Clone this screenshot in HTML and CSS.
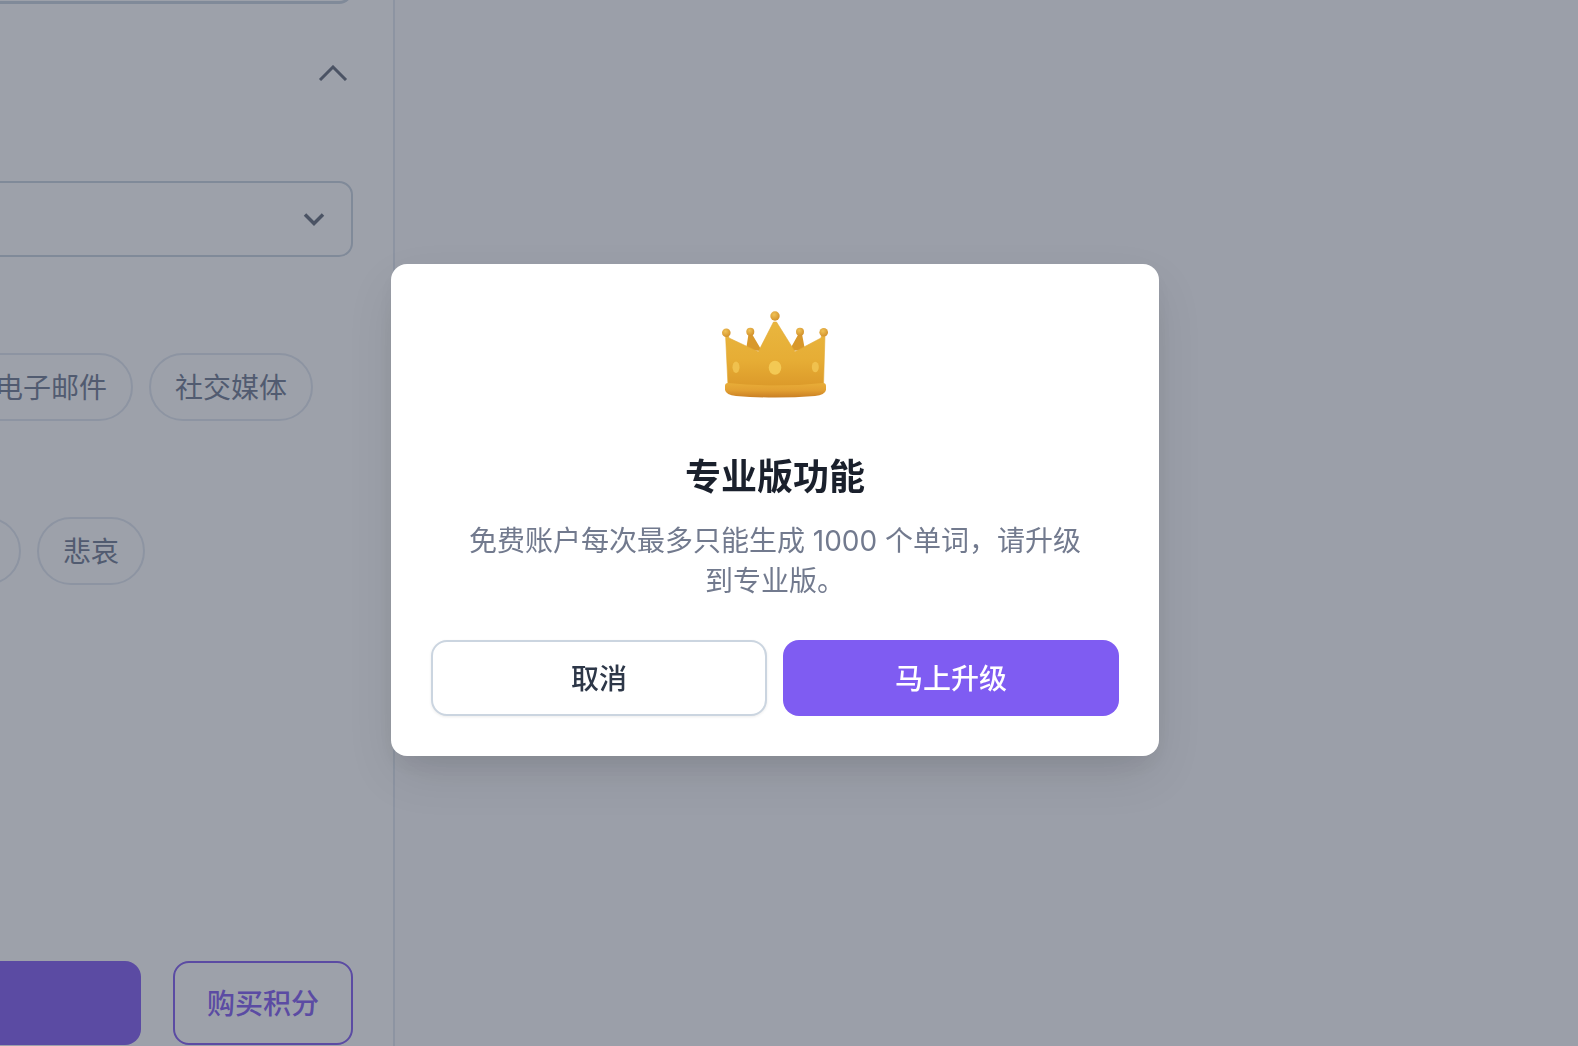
FILE: index.html
```html
<!DOCTYPE html>
<html lang="zh-CN">
<head>
    <meta charset="UTF-8">
    <meta name="viewport" content="width=device-width, initial-scale=1.0">
    <title>专业版功能</title>
    <link rel="stylesheet" href="styles.css">
</head>
<body>
    <div class="page">
        <aside class="sidebar">
            <div class="text-box">
                <svg class="resizer" viewBox="0 0 12 4" width="12" height="4"><path d="M1 0 L3 3 M5 0 L7 3 M9 0 L11 3"/></svg>
            </div>
            <div class="section-head">
                <svg class="chevron-up" viewBox="0 0 30 16" width="30" height="16"><path d="M2 15 L15 2 L28 15"/></svg>
            </div>
            <div class="select-box">
                <svg class="chevron-down" viewBox="0 0 22 14" width="22" height="14"><path d="M2 2.500 L11 11.500 L20 2.500"/></svg>
            </div>
            <div class="pill-row row-format">
                <span class="pill">电子邮件</span>
                <span class="pill">社交媒体</span>
            </div>
            <div class="pill-row row-tone">
                <span class="pill pill-blank"></span>
                <span class="pill">悲哀</span>
            </div>
            <div class="actions">
                <button class="btn-generate"></button>
                <button class="btn-credits">购买积分</button>
            </div>
        </aside>
        <main class="content"></main>
    </div>

    <div class="overlay">
        <div class="modal">
            <svg class="crown" viewBox="0 0 120 100" width="120" height="100">
                <defs>
                    <linearGradient id="gold" x1="0" y1="0" x2="0" y2="1">
                        <stop offset="0" stop-color="#e9b63f"/>
                        <stop offset="0.6" stop-color="#e6ad35"/>
                        <stop offset="1" stop-color="#dc9a2a"/>
                    </linearGradient>
                    <linearGradient id="rim" x1="0" y1="0" x2="0" y2="1">
                        <stop offset="0" stop-color="#e8ad38"/>
                        <stop offset="0.5" stop-color="#e2a032"/>
                        <stop offset="1" stop-color="#c97f24"/>
                    </linearGradient>
                    <radialGradient id="ball" cx="0.4" cy="0.35" r="0.7">
                        <stop offset="0" stop-color="#f0c256"/>
                        <stop offset="1" stop-color="#d18f2a"/>
                    </radialGradient>
                </defs>
                <path d="M33.500 30 L37 30 L47 47 L31 46 Z M83.500 30 L87 30 L90 46 L74 47 Z" fill="#d8982b"/>
                <path d="M10.500 30 L13 30 L14 34 L43.300 47.700 L58.500 18 L61.500 18 L80 47.700 L106 34 L107 30 L110 30 L108.500 82 L13 82 Z" fill="url(#gold)" stroke="#e3a934" stroke-width="0.6" stroke-linejoin="round"/>
                <path d="M10 82 Q10 79 13 79 Q60 84 108 79 Q111 79 111 82 L111 86 Q110 91 100 92 Q60 95 21 92 Q11 91 10 86 Z" fill="url(#rim)"/>
                <circle cx="60" cy="12" r="4.700" fill="url(#ball)"/>
                <circle cx="11.300" cy="28.700" r="4.300" fill="url(#ball)"/>
                <circle cx="35.300" cy="27.700" r="4" fill="url(#ball)"/>
                <circle cx="85" cy="27.700" r="4" fill="url(#ball)"/>
                <circle cx="108.700" cy="28.300" r="4.300" fill="url(#ball)"/>
                <ellipse cx="60" cy="63.700" rx="6.300" ry="7" fill="#f3c954"/>
                <ellipse cx="21" cy="63.300" rx="3.500" ry="5.700" fill="#f0c14e"/>
                <ellipse cx="100.300" cy="63" rx="3.500" ry="5.300" fill="#f0c14e"/>
            </svg>
            <h2 class="modal-title">专业版功能</h2>
            <p class="modal-text">免费账户每次最多只能生成 1000 个单词，请升级到专业版。</p>
            <div class="modal-buttons">
                <button class="btn-cancel">取消</button>
                <button class="btn-upgrade">马上升级</button>
            </div>
        </div>
    </div>
</body>
</html>
```

FILE: styles.css
```css
* {
    box-sizing: border-box;
}
html, body {
    margin: 0;
    height: 100%;
    overflow: hidden;
}
body {
    font-family: Inter, "Noto Sans CJK SC", sans-serif;
    background-color: #fff;
}
button {
    font-family: inherit;
    font-size: 28px;
    padding: 0 0 2px;
}
.page {
    display: flex;
    height: 1046px;
}
.sidebar {
    width: 395px;
    flex-shrink: 0;
    display: flex;
    flex-direction: column;
    align-items: flex-end;
    padding-right: 40px;
    border-right: 2px solid #e2e8f0;
    background-color: #fff;
}
.content {
    flex: 1;
    background-color: #fbfbfd;
}
.text-box {
    width: 500px;
    height: 34px;
    margin-top: -30px;
    display: flex;
    justify-content: flex-end;
    align-items: flex-end;
    padding: 0 6px 0 0;
    border: 2px solid #cbd5e0;
    border-bottom-width: 3px;
    border-radius: 14px;
    flex-shrink: 0;
}
.resizer path {
    fill: none;
    stroke: #6b7280;
    stroke-width: 1;
}
.section-head {
    display: flex;
    justify-content: flex-end;
    margin-top: 61px;
    padding-right: 5px;
    height: 16px;
}
.chevron-up path, .chevron-down path {
    fill: none;
    stroke: #6b7280;
    stroke-width: 3;
}
.chevron-down path {
    stroke-width: 3.500;
}
.select-box {
    width: 500px;
    height: 76px;
    margin-top: 100px;
    padding-right: 26px;
    display: flex;
    justify-content: flex-end;
    align-items: center;
    border: 2px solid #cbd5e0;
    border-radius: 14px;
    flex-shrink: 0;
}
.pill-row {
    display: flex;
    justify-content: flex-end;
    align-self: flex-start;
    gap: 16px;
    height: 68px;
}
.row-format {
    margin-top: 96px;
    width: 313px;
}
.row-tone {
    margin-top: 96px;
    width: 145px;
}
.pill {
    display: flex;
    align-items: center;
    flex-shrink: 0;
    padding: 0 24px 3px;
    border: 2px solid #e2e8f0;
    border-radius: 34px;
    font-size: 28px;
    color: #768096;
    white-space: nowrap;
}
.pill-blank {
    width: 108px;
}
.actions {
    display: flex;
    justify-content: flex-end;
    gap: 32px;
    margin-top: auto;
    margin-bottom: 1px;
}
.btn-generate {
    width: 500px;
    height: 84px;
    border: none;
    border-radius: 16px;
    background-color: #8763f2;
}
.btn-credits {
    width: 180px;
    height: 84px;
    border: 2px solid #8763f2;
    border-radius: 16px;
    background-color: #fff;
    color: #8763f2;
    font-weight: 500;
}
.overlay {
    position: fixed;
    inset: 0;
    padding: 264px 0 0 391px;
    background-color: rgba(38, 46, 66, 0.45);
}
.modal {
    width: 768px;
    height: 492px;
    padding: 40px;
    display: flex;
    flex-direction: column;
    align-items: center;
    background-color: #fff;
    border-radius: 16px;
    box-shadow: 0 20px 50px -5px rgba(0, 0, 0, 0.12), 0 10px 20px -5px rgba(0, 0, 0, 0.06);
}
.crown {
    flex-shrink: 0;
}
.modal-title {
    margin: 51px 0 22px;
    font-size: 36px;
    line-height: 44px;
    font-weight: 600;
    color: #1a202c;
}
.modal-text {
    margin: 0 0 39px;
    max-width: 632px;
    font-size: 28px;
    line-height: 40px;
    color: #727a8e;
    text-align: center;
}
.modal-buttons {
    display: grid;
    grid-template-columns: 1fr 1fr;
    gap: 16px;
    width: 100%;
}
.btn-cancel, .btn-upgrade {
    height: 76px;
    border-radius: 16px;
    font-weight: 500;
}
.btn-cancel {
    border: 2px solid #cbd5e0;
    background-color: #fff;
    color: #2d3748;
    box-shadow: 0 1px 3px rgba(0, 0, 0, 0.08);
}
.btn-upgrade {
    border: none;
    background-color: #7f5cf2;
    color: #fff;
}
```
